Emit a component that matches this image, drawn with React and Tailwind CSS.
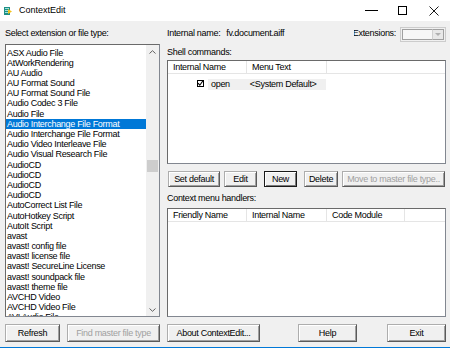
import React from "react";

const items = [
  "ASX Audio File",
  "AtWorkRendering",
  "AU Audio",
  "AU Format Sound",
  "AU Format Sound File",
  "Audio Codec 3 File",
  "Audio File",
  "Audio Interchange File Format",
  "Audio Interchange File Format",
  "Audio Video Interleave File",
  "Audio Visual Research File",
  "AudioCD",
  "AudioCD",
  "AudioCD",
  "AudioCD",
  "AutoCorrect List File",
  "AutoHotkey Script",
  "AutoIt Script",
  "avast",
  "avast! config file",
  "avast! license file",
  "avast! SecureLine License",
  "avast! soundpack file",
  "avast! theme file",
  "AVCHD Video",
  "AVCHD Video File",
  "AVI Audio File",
];

function Btn({ w, children, disabled, def, className = "" }) {
  const base =
    "flex items-center justify-center shrink-0 bg-[#f0f0f0] whitespace-nowrap";
  const border = def
    ? "border border-[#1a1a1a] shadow-[inset_1px_1px_0_#ffffff,inset_-1px_-1px_0_#7a7a7a]"
    : "border border-[#adadad] border-r-[#5a5a5a] border-b-[#5a5a5a] shadow-[inset_1px_1px_0_#ffffff,inset_-1px_-1px_0_#a0a0a0]";
  return (
    <div
      className={`${base} ${border} ${disabled ? "text-[#a0a0a0]" : "text-black"} ${className}`}
      style={{ width: w }}
    >
      {children}
    </div>
  );
}

function Header({ cols }) {
  return (
    <div className="flex h-[13px] shrink-0 border-b border-[#e5e5e5] bg-white">
      {cols.map((c, i) => (
        <div
          key={i}
          className="flex items-center pl-[5px] border-r border-[#e5e5e5] shrink-0 h-full"
          style={{ width: c.w }}
        >
          {c.t}
        </div>
      ))}
      <div className="flex-1" />
    </div>
  );
}

export default function App() {
  return (
    <div className="w-[450px] h-[348px] overflow-hidden bg-[#f0f0f0] flex flex-col font-['Liberation_Sans',Arial,sans-serif] text-[9px] tracking-[-0.3px] text-black leading-none">
      {/* title bar */}
      <div className="h-[21px] shrink-0 bg-white flex items-center">
        <svg width="8" height="8" viewBox="0 0 8 8" className="ml-[4px]">
          <rect x="0" y="0" width="6" height="8" fill="#1e8f86" />
          <rect x="1" y="1" width="4" height="1" fill="#9fe3dc" />
          <rect x="1" y="3" width="4" height="1" fill="#9fe3dc" />
          <rect x="1" y="5" width="4" height="1" fill="#9fe3dc" />
          <polygon points="4,2 8,4.5 4,7" fill="#f4c21a" />
        </svg>
        <span className="ml-[7px] tracking-normal">ContextEdit</span>
        <div className="flex-1" />
        <div className="w-[31px] h-full flex items-center justify-center">
          <div className="w-[13px] h-px bg-black" />
        </div>
        <div className="w-[31px] h-full flex items-center justify-center">
          <div className="w-[9px] h-[9px] border border-black" />
        </div>
        <div className="w-[31px] h-full flex items-center justify-center mr-[1px]">
          <svg width="10" height="10" viewBox="0 0 10 10">
            <path d="M0.5 0.5 L9.5 9.5 M9.5 0.5 L0.5 9.5" stroke="#000" strokeWidth="0.9" />
          </svg>
        </div>
      </div>

      {/* body */}
      <div className="flex flex-1 min-h-0">
        {/* left column */}
        <div className="ml-[5px] w-[155px] flex flex-col shrink-0">
          <div className="h-[23px] flex items-center pt-[1px]">Select extension or file type:</div>
          <div className="h-[273px] flex border border-[#828790] border-t-[#6a6a6a] border-l-[#6a6a6a] bg-white">
            <div className="flex-1 overflow-hidden pt-[2.5px] leading-[10.2px]">
              {items.map((t, i) => (
                <div
                  key={i}
                  className={`h-[10.2px] pl-[1px] whitespace-nowrap ${
                    i === 7 ? "bg-[#0078d7] text-white" : ""
                  }`}
                >
                  {t}
                </div>
              ))}
            </div>
            <div className="w-[13px] bg-[#f0f0f0] flex flex-col">
              <div className="h-[13px] flex items-center justify-center">
                <svg width="7" height="4" viewBox="0 0 7 4">
                  <path d="M0.5 3.5 L3.5 0.7 L6.5 3.5" stroke="#606060" fill="none" strokeWidth="1" />
                </svg>
              </div>
              <div className="flex-1 flex flex-col items-center">
                <div className="mt-[102px] w-[11px] h-[12px] bg-[#cdcdcd]" />
              </div>
              <div className="h-[13px] flex items-center justify-center">
                <svg width="7" height="4" viewBox="0 0 7 4">
                  <path d="M0.5 0.5 L3.5 3.3 L6.5 0.5" stroke="#606060" fill="none" strokeWidth="1" />
                </svg>
              </div>
            </div>
          </div>
          <div className="mt-[7px] h-[18px] flex">
            <Btn w={55}>Refresh</Btn>
            <Btn w={93} disabled className="ml-[7px]">Find master file type</Btn>
          </div>
        </div>

        {/* right column */}
        <div className="ml-[7px] w-[279px] flex flex-col shrink-0">
          <div className="h-[23px] flex items-center">
            <span className="pt-[1px]">Internal name:</span>
            <span className="ml-[6px] pt-[1px]">fv.document.aiff</span>
            <div className="flex-1" />
            <div className="w-[42px] overflow-hidden flex justify-end pt-[1px]">
              <span className="whitespace-nowrap">Extensions:</span>
            </div>
            <div className="ml-[4px] mt-[3px] w-[46px] h-[15px] border border-[#cccccc] bg-[#f0f0f0] flex p-[1px]">
              <div className="flex-1 border border-[#a0a0a0] border-r-0 bg-[#f7f7f7]" />
              <div className="w-[12px] bg-[#e8e8e8] border border-[#a0a0a0] border-l-[#d0d0d0] flex items-center justify-center">
                <svg width="6" height="3" viewBox="0 0 6 3">
                  <polygon points="0,0 6,0 3,3" fill="#b0b0b0" />
                </svg>
              </div>
            </div>
          </div>
          <div className="h-[16px] flex items-center pt-[1px]">Shell commands:</div>
          <div className="h-[104px] flex flex-col border border-[#828790] border-t-[#6a6a6a] border-l-[#6a6a6a] bg-white">
            <Header cols={[{ w: 79, t: "Internal Name" }, { w: 80, t: "Menu Text" }]} />
            <div className="mt-[5px] h-[11px] flex">
              <div className="w-[29px] shrink-0" />
              <div className="w-[7px] h-[7px] mt-[1px] border border-black flex items-center justify-center shrink-0">
                <svg width="7" height="7" viewBox="0 0 7 7" className="shrink-0">
                  <path d="M1 3.2 L2.8 5.2 L6.5 0" stroke="#000" strokeWidth="1.1" fill="none" />
                </svg>
              </div>
              <div className="ml-[4px] w-[118px] h-[11px] bg-[#f0f0f0] flex items-center shrink-0">
                <span className="ml-[3px]">open</span>
                <span className="ml-[20px]">&lt;System Default&gt;</span>
              </div>
            </div>
          </div>
          <div className="mt-[7px] h-[16px] flex">
            <Btn w={52} className="ml-[1px]">Set default</Btn>
            <Btn w={33} className="ml-[4px]">Edit</Btn>
            <Btn w={33} def className="ml-[7px]">New</Btn>
            <Btn w={34} className="ml-[7px]">Delete</Btn>
            <Btn w={103} disabled className="ml-[4px]">Move to master file type..</Btn>
          </div>
          <div className="h-[21px] flex items-center pt-[1px]">Context menu handlers:</div>
          <div className="h-[109px] flex flex-col border border-[#828790] border-t-[#6a6a6a] border-l-[#6a6a6a] bg-white">
            <Header
              cols={[
                { w: 79, t: "Friendly Name" },
                { w: 80, t: "Internal Name" },
                { w: 78, t: "Code Module" },
              ]}
            />
          </div>
          <div className="mt-[7px] h-[18px] flex">
            <Btn w={93}>About ContextEdit...</Btn>
            <Btn w={59} className="ml-[38px]">Help</Btn>
            <Btn w={59} className="ml-[30px]">Exit</Btn>
          </div>
        </div>
      </div>
      <div className="h-[1px] shrink-0 bg-[#0078d7]" />
    </div>
  );
}
